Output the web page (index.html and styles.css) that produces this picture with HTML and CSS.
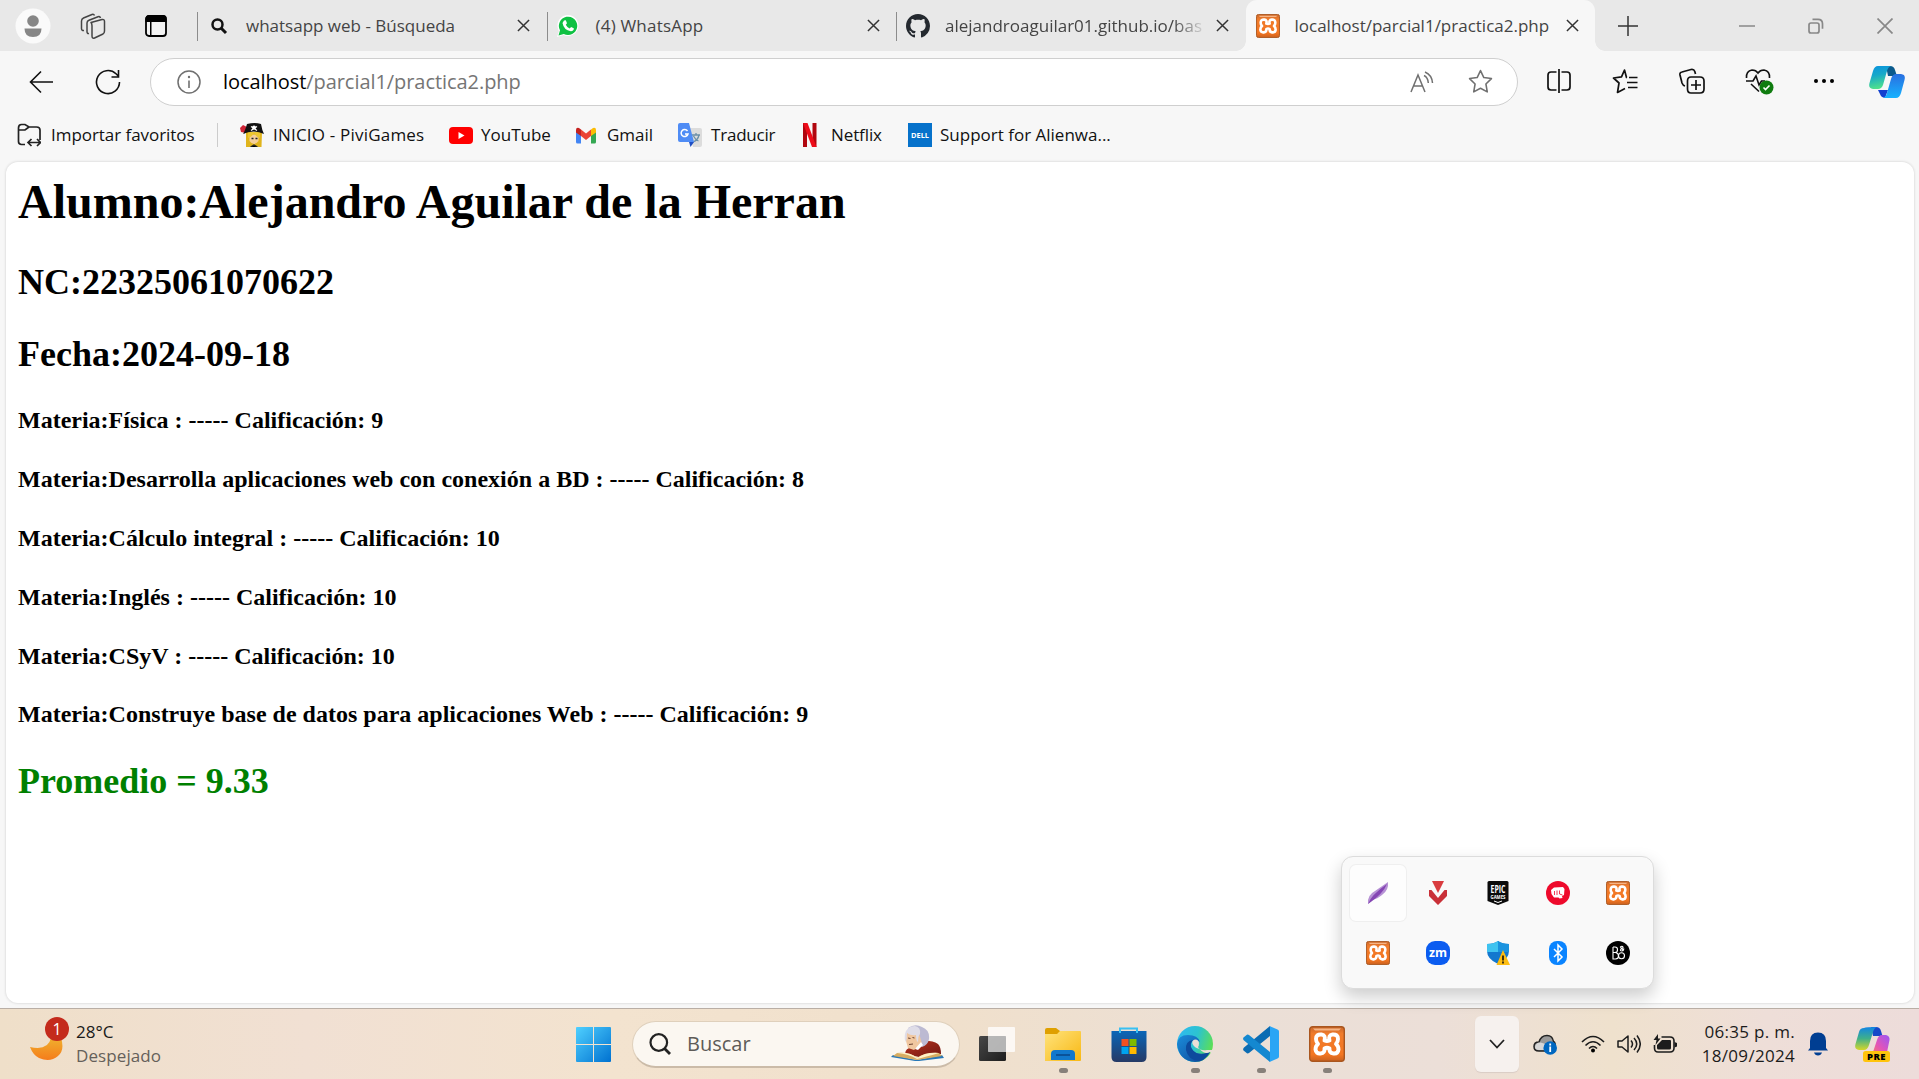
FILE: index.html
```html
<!DOCTYPE html>
<html lang="es">
<head>
<meta charset="utf-8">
<title>localhost/parcial1/practica2.php</title>
<link rel="stylesheet" href="styles.css">
</head>
<body>
<svg class="defs" aria-hidden="true">
  <defs>
    <linearGradient id="orange" x1="0" y1="0" x2="0" y2="1"><stop offset="0" stop-color="#c9662a"/><stop offset=".2" stop-color="#f07c2c"/><stop offset=".8" stop-color="#f47621"/><stop offset="1" stop-color="#c9601f"/></linearGradient>
    <linearGradient id="cpA" x1="0" y1="0" x2=".2" y2="1"><stop offset="0" stop-color="#0b93df"/><stop offset=".45" stop-color="#17a9c9"/><stop offset="1" stop-color="#4fe08c"/></linearGradient>
    <linearGradient id="cpB" x1="0" y1="0" x2="0" y2="1"><stop offset="0" stop-color="#2a6fe0"/><stop offset="1" stop-color="#16b2ff"/></linearGradient>
    <linearGradient id="preA" x1="0" y1="0" x2="0" y2="1"><stop offset="0" stop-color="#1285e4"/><stop offset=".5" stop-color="#3fb08a"/><stop offset="1" stop-color="#d5d629"/></linearGradient>
    <linearGradient id="preB" x1="1" y1="0" x2="0" y2="1"><stop offset="0" stop-color="#9a57f5"/><stop offset=".5" stop-color="#e254b8"/><stop offset="1" stop-color="#ff8a50"/></linearGradient>
    <linearGradient id="win" x1="0" y1="0" x2="1" y2="1"><stop offset="0" stop-color="#4fd0ff"/><stop offset="1" stop-color="#0071d0"/></linearGradient>
    <linearGradient id="moon" x1="0" y1="0" x2="0" y2="1"><stop offset="0" stop-color="#f0b02e"/><stop offset="1" stop-color="#f57c1b"/></linearGradient>
    <linearGradient id="folder" x1="0" y1="0" x2="1" y2="1"><stop offset="0" stop-color="#ffe37c"/><stop offset="1" stop-color="#f8b814"/></linearGradient>
    <linearGradient id="store" x1="0" y1="0" x2="0" y2="1"><stop offset="0" stop-color="#0a66b8"/><stop offset="1" stop-color="#263a66"/></linearGradient>
    <linearGradient id="edgeTop" x1="0" y1=".3" x2="1" y2=".6"><stop offset="0" stop-color="#2fbaf0"/><stop offset=".5" stop-color="#2cc3d0"/><stop offset="1" stop-color="#5fe04e"/></linearGradient>
    <linearGradient id="edgeLow" x1="0" y1="0" x2="1" y2="1"><stop offset="0" stop-color="#1b8ddb"/><stop offset="1" stop-color="#0d4596"/></linearGradient>
    <linearGradient id="dark" x1="0" y1="0" x2="1" y2="1"><stop offset="0" stop-color="#484848"/><stop offset="1" stop-color="#1d1d1d"/></linearGradient>
    <linearGradient id="robe" x1="0" y1="0" x2="1" y2="1"><stop offset="0" stop-color="#b8361f"/><stop offset="1" stop-color="#711510"/></linearGradient>
    <symbol id="x" viewBox="0 0 14 14"><path d="M1 1l12 12M13 1L1 13" fill="none" stroke="currentColor" stroke-width="1.6"/></symbol>
    <symbol id="xampp" viewBox="0 0 36 36">
      <rect x=".7" y=".7" width="34.6" height="34.6" rx="3" fill="url(#orange)" stroke="#a9561f" stroke-width="1.4"/>
      <path d="M4 2.500h28l-2 2H6z" fill="#fbc79c" opacity=".8"/>
      <path d="M15.500 14.500Q17 9 12.500 8.500Q7 8 7 13Q7 16 9 18Q6.500 20 6.500 23.500Q7 28 11.500 27.500Q16 27 15.500 22.500Q18 21 20.500 22.500Q20 27 24.500 27.500Q29 28 29.500 23.500Q29.500 20 27 18Q29 16 29 13Q29 8 23.500 8.500Q19 9 20.500 14.500Q18 15.500 15.500 14.500z" fill="none" stroke="#fff" stroke-width="3.900" stroke-linejoin="round"/>
    </symbol>
  </defs>
</svg>

<div class="screen">
  <header class="tabs">
    <div class="tab-tools">
      <svg class="avatar" viewBox="0 0 36 36"><circle cx="18" cy="18" r="17.500" fill="#fafafa"/><circle cx="18" cy="13" r="5.800" fill="#868686"/><path d="M9.500 20.500h17q0 8.500-8.500 8.500t-8.500-8.500z" fill="#868686"/></svg>
      <svg class="spaces" viewBox="0 0 26 26"><g fill="none" stroke="#444" stroke-width="1.500" stroke-linejoin="round"><path d="M11 9.500l11-3q2.500-.5 2.500 2v9.500q0 2-1.500 3l-8.500 4q-2.500.8-2.500-2V13q0-2.500-1-3.500z"/><path d="M9 20.500q-2 .5-2-2V10q0-2 2-2.800l9-3.500q2-.6 2.500 1.300M4 17.500q-2.500.3-2.500-2V8q0-2.200 2-3l8.500-3.500q1.800-.6 2.500 1"/></g></svg>
      <svg class="panel" viewBox="0 0 24 24"><rect x="2" y="2" width="20" height="20" rx="3" fill="#f3f3f3" stroke="#000" stroke-width="1.800"/><path d="M1.500 8V5q0-4 4-4h13q4 0 4 4v3zM6 8h1.500v14H6z"/></svg>
    </div>
    <div class="tab">
      <svg class="fav" viewBox="0 0 24 24"><circle cx="10.500" cy="10.500" r="5" fill="none" stroke="#111" stroke-width="2.500"/><path d="M14 14l5 5" stroke="#111" stroke-width="3"/></svg>
      <span class="tab-title">whatsapp web - Búsqueda</span>
      <svg class="tab-x"><use href="#x"/></svg>
    </div>
    <div class="tab">
      <svg class="fav" viewBox="0 0 24 24"><path d="M0 23l2-6A10.500 10.500 0 1 1 6.500 21z" fill="#fff"/><path d="M1.500 21.500l1.500-5.200A9.200 9.200 0 1 1 6.800 20z" fill="#0fc143"/><path d="M7 6.500l1.800-.2 1.200 3-1.200 1.400q1.200 2.500 3.800 3.700l1.500-1.500 2.700 1.400q.3 2.700-3 3-7-1-8.300-8.200z" fill="#fff"/></svg>
      <span class="tab-title wide">(4) WhatsApp</span>
      <svg class="tab-x"><use href="#x"/></svg>
    </div>
    <div class="tab">
      <svg class="fav" viewBox="0 0 16 16"><path fill="#24292f" d="M8 0C3.580 0 0 3.580 0 8c0 3.540 2.290 6.530 5.470 7.590.4.070.55-.17.55-.38 0-.19-.01-.82-.01-1.490-2.010.37-2.530-.49-2.690-.94-.09-.23-.48-.94-.82-1.130-.28-.15-.68-.52-.01-.53.63-.01 1.080.58 1.230.82.72 1.210 1.870.87 2.330.66.070-.52.280-.87.510-1.070-1.780-.2-3.640-.89-3.640-3.950 0-.87.310-1.590.82-2.150-.08-.2-.36-1.020.08-2.120 0 0 .67-.21 2.200.82.640-.18 1.320-.27 2-.27s1.360.09 2 .27c1.530-1.040 2.200-.82 2.200-.82.440 1.100.16 1.920.08 2.120.51.560.82 1.270.82 2.150 0 3.070-1.870 3.750-3.650 3.950.29.25.54.73.54 1.480 0 1.070-.01 1.930-.01 2.200 0 .21.15.46.55.38A8 8 0 0 0 16 8c0-4.420-3.580-8-8-8z"/></svg>
      <span class="tab-title fade">alejandroaguilar01.github.io/bas</span>
      <svg class="tab-x"><use href="#x"/></svg>
    </div>
    <div class="tab active">
      <svg class="fav"><use href="#xampp"/></svg>
      <span class="tab-title">localhost/parcial1/practica2.php</span>
      <svg class="tab-x"><use href="#x"/></svg>
    </div>
    <svg class="new-tab" viewBox="0 0 20 20"><path d="M10 0v20M0 10h20" stroke="#333" stroke-width="1.500"/></svg>
    <div class="window-buttons">
      <svg viewBox="0 0 16 16"><path d="M0 8h16" stroke="#888" stroke-width="1.500"/></svg>
      <svg viewBox="0 0 16 16"><g fill="none" stroke="#888" stroke-width="1.700"><rect x="1" y="5" width="10" height="10" rx="2"/><path d="M4.500 1.300H10q4.500 0 4.500 4.500v5"/></g></svg>
      <svg viewBox="0 0 16 16"><path d="M.5.500l15 15M15.500.500l-15 15" stroke="#888" stroke-width="1.700"/></svg>
    </div>
  </header>

  <div class="toolbar">
    <svg class="back" viewBox="0 0 24 24"><path d="M12 1.500L1.500 12 12 22.500M1.500 12H24" fill="none" stroke="#111" stroke-width="1.600"/></svg>
    <svg class="reload" viewBox="0 0 26 26"><path d="M24.500 13A11.500 11.500 0 1 1 21 4.800l2 2M23.500 1v7h-7" fill="none" stroke="#111" stroke-width="1.600"/></svg>
    <div class="address">
      <svg class="info" viewBox="0 0 24 24"><circle cx="12" cy="12" r="11" fill="none" stroke="#707070" stroke-width="1.500"/><path d="M12 10.500V18" stroke="#707070" stroke-width="1.600"/><circle cx="12" cy="7" r="1.200" fill="#707070"/></svg>
      <span class="url"><b>localhost</b>/parcial1/practica2.php</span>
      <svg class="read" viewBox="0 0 24 22"><path d="M1 21L8 4l7 17M3.500 15h9M14 4.500q4 2 4.300 7.500M15 1q7 3 7.500 11" fill="none" stroke="#707070" stroke-width="1.500"/></svg>
      <svg class="star" viewBox="0 0 24 24"><path d="M12 1.500l3.200 6.700 7.300 1-5.300 5.200 1.300 7.600-6.500-3.500L5.500 22l1.300-7.600L1.500 9.200l7.300-1z" fill="none" stroke="#707070" stroke-width="1.500" stroke-linejoin="round"/></svg>
    </div>
    <div class="actions">
      <svg viewBox="0 0 26 26"><path d="M10.500 4H5Q2 4 2 7v12q0 3 3 3h5.500M15.500 4H21q3 0 3 3v12q0 3-3 3h-5.500M13 1v24" fill="none" stroke="#111" stroke-width="1.700"/></svg>
      <svg viewBox="0 0 26 26"><path d="M15 9.500h-.500L12.500 2 9.500 8.800 1.500 10l5.500 5-1.500 9.500 7.500-4M17 9.500h8.500M15 14.500h10.500M16 19.500h9.500" fill="none" stroke="#111" stroke-width="1.700" stroke-linejoin="round"/></svg>
      <svg viewBox="0 0 26 26"><path d="M6 18Q4 17.500 3 15L1 7Q.5 4.500 3 4l9-2.500q3-.5 3.800 2L16.500 6M12 9h9q4 0 4 4v8q0 4-4 4h-9q-3.500 0-3.500-4v-8q0-4 3.500-4zM17 12v10M12 17h10" fill="none" stroke="#111" stroke-width="1.700"/></svg>
      <svg class="health" viewBox="0 0 30 28"><path d="M1.500 10Q1 3 7 2q4 0 6 3 2-3 6-3 6 1 5.500 8M1 13h7l3-5 3 9 2.500-4H20M6 16l8 7.500" fill="none" stroke="#111" stroke-width="1.600"/><circle cx="21.500" cy="19.500" r="7" fill="#107c10"/><path d="M18.500 19.500l2 2 4-4" fill="none" stroke="#fff" stroke-width="1.600"/></svg>
      <svg viewBox="0 0 26 26"><circle cx="5" cy="13" r="2"/><circle cx="13" cy="13" r="2"/><circle cx="21" cy="13" r="2"/></svg>
    </div>
    <svg class="copilot" viewBox="0 0 36 32"><path d="M17 0h4q4 0 5 4l2 6h-9z" fill="#0b5a8c"/><path d="M9 24h10l-3 8q-4-.5-5-4z" fill="#1240d0"/><path d="M9 0h13q-3 1-4 5l-4 14q-1.500 4-5 4H4q-5-.5-3.500-6L4 5q1.500-5 5-5z" fill="url(#cpA)"/><path d="M27 32H14q3-1 4-5l4-14q1.500-5 5-5h5q5 .5 3.500 6L32 27q-1.500 5-5 5z" fill="url(#cpB)"/></svg>
  </div>

  <nav class="favorites">
    <span class="bm import"><svg viewBox="0 0 24 24"><path d="M8 21.500H4.500q-3 0-3-3V5q0-3.500 3-3.500H8L12 4h7.500q3.500 0 3.500 3v10M1.500 7H8l4-3M12 19.500h11M14.500 16L11 19.500l3.500 3.500M20 16l3.500 3.500L20 23" fill="none" stroke="#222" stroke-width="1.700"/></svg><span>Importar favoritos</span></span>
    <span class="bm pivi"><svg viewBox="0 0 24 24"><path d="M6 9h16l-.5 15H18l-4-2-4 2H6z" fill="#e0b41c"/><path d="M9.500 13q4.500-3 9 0v5q-4.500 6-9 0z" fill="#f5cf9b"/><path d="M8 15q4-1 6-5 2 4 6 5V9H8z" fill="#edc732"/><path d="M0 5l3-3 4 2-1 6-5-1z" fill="#cf2436"/><path d="M3 11Q5 8 7 1q8-2 14 0 1 6 3 10-5-2.500-10.500-2.500T3 11z" fill="#111"/><path d="M11 3.500l6 4M17 3.500l-6 4" stroke="#fff" stroke-width="1.300"/><circle cx="14" cy="4.500" r="2" fill="#fff"/><path d="M11.500 15.500h2M15.500 15.500h2M10.500 24l3.500-2 3.500 2" stroke="#222" stroke-width="1.300"/></svg><span>INICIO - PiviGames</span></span>
    <span class="bm yt"><svg viewBox="0 0 24 24"><rect y="4" width="24" height="17" rx="4" fill="#f00"/><path d="M9.500 9l6 3.500-6 3.500z" fill="#fff"/></svg><span>YouTube</span></span>
    <span class="bm gm"><svg viewBox="0 0 24 24"><path d="M2 7v12q0 1.500 1.500 1.500H7V11z" fill="#4285f4"/><path d="M22 7v12q0 1.500-1.500 1.500H17V11z" fill="#34a853"/><path d="M17 6.500l2-1.500q3-1 3 2v2.500L17 13z" fill="#fbbc04"/><path d="M7 6.500L5 5Q2 4 2 7v2.500L7 13z" fill="#c5221f"/><path d="M7 6.500l5 4 5-4V13l-5 4-5-4z" fill="#ea4335"/></svg><span>Gmail</span></span>
    <span class="bm tr"><svg viewBox="0 0 24 24"><path d="M10 5h12q2 0 2 2v15q0 2-2 2h-7z" fill="#dcdcdc"/><path d="M14 12h8M18 10v2M21 12q-1 5-6 7M15.500 13q2 4 5 5" fill="none" stroke="#6b8fa8" stroke-width="1.300"/><path d="M2 0h9l5 19H2q-2 0-2-2V2q0-2 2-2z" fill="#4f8cf5"/><path d="M11 19h5l-3.500 5z" fill="#1f4fc4"/><path d="M9.500 8A3.500 3.500 0 1 0 10 11H7" fill="none" stroke="#fff" stroke-width="1.500"/></svg><span>Traducir</span></span>
    <span class="bm nf"><svg viewBox="0 0 24 24"><path d="M5 0h4v24H5zM14.500 0h4v24h-4z" fill="#b1060f"/><path d="M5 0h4.500l9 24H14z" fill="#ed0c19"/></svg><span>Netflix</span></span>
    <span class="bm dell"><svg viewBox="0 0 24 24"><path d="M0 0h24v24H0z" fill="#0672cb"/><text x="12" y="14.800" text-anchor="middle" textLength="18" lengthAdjust="spacingAndGlyphs" class="dell-text">DELL</text></svg><span>Support for Alienwa...</span></span>
  </nav>

  <main class="page">
    <h1>Alumno:Alejandro Aguilar de la Herran</h1>
    <h2>NC:22325061070622</h2>
    <h2>Fecha:2024-09-18</h2>
    <h4>Materia:Física : ----- Calificación: 9</h4>
    <h4>Materia:Desarrolla aplicaciones web con conexión a BD : ----- Calificación: 8</h4>
    <h4>Materia:Cálculo integral : ----- Calificación: 10</h4>
    <h4>Materia:Inglés : ----- Calificación: 10</h4>
    <h4>Materia:CSyV : ----- Calificación: 10</h4>
    <h4>Materia:Construye base de datos para aplicaciones Web : ----- Calificación: 9</h4>
    <h2 class="average">Promedio = 9.33</h2>
  </main>

  <footer class="taskbar">
    <div class="weather">
      <div class="moon"><svg viewBox="0 0 33 30"><path d="M31 4Q35 16 28 22 20 29 9 24 3 21 0 13q18 4 21-9z" fill="url(#moon)"/></svg><span class="badge">1</span></div>
      <div class="weather-text"><span class="temp">28°C</span><span class="sky">Despejado</span></div>
    </div>
    <svg class="start" viewBox="0 0 35 35"><path d="M1 0h16v17H0V1q0-1 1-1zM18 0h16q1 0 1 1v16H18zM0 18h17v17H1q-1 0-1-1zM18 18h17v16q0 1-1 1H18z" fill="url(#win)"/></svg>
    <div class="search">
      <svg class="lens" viewBox="0 0 22 22"><circle cx="9.800" cy="9.500" r="8.300" fill="none" stroke="#222" stroke-width="2.200"/><path d="M15.500 15.500l5.500 5.500" stroke="#222" stroke-width="2.800"/></svg>
      <span class="search-text">Buscar</span>
      <svg class="writer" viewBox="0 0 53 37"><path d="M14 29q0-6 8-7l8-6q11-1 17 3 3 3 3 10l-22 3z" fill="url(#robe)"/><path d="M17 3q7-5 14-1 8 3 7 12-1 6-7 8l-6-4z" fill="#bcbad2"/><path d="M17 6q-4 3-2 10l2 7 6 2 8-6-3-11z" fill="#f0c7a0"/><path d="M14 9q2-8 10-8 6 1 5 8-2 2-2 8-2-1-2-7-5 1-9-2 0 5-1 9-2-3-1-8z" fill="#dfdde8"/><path d="M17 13l2.500.500M21.500 12.500l2 .500M18 19.500l4-.500" stroke="#6d4433" stroke-width="1"/><path d="M24 24l6-7 2 3-5 5z" fill="#fff"/><path d="M0 32l2-2 24 5 25-5 2 3-25 3h-4z" fill="#2878b8"/><path d="M2 31l4-3q14-1 20 5 8-6 22-5l3 3-25 4z" fill="#d7ad62"/><path d="M6 28q14-1 20 5 8-6 22-5-14 4-22 6Q18 29 6 28z" fill="#fff1c7"/></svg>
    </div>
    <div class="apps">
      <div class="app"><svg viewBox="0 0 36 36"><rect y="10" width="27" height="25" rx="1.500" fill="url(#dark)"/><rect x="9" y="1" width="27" height="25" rx="1" fill="#fff" opacity=".78"/><path d="M9 10h18v16H9z" fill="#999" opacity=".5"/></svg></div>
      <div class="app open"><svg viewBox="0 0 36 36"><path d="M0 4q0-2 2-2h9l4 3v4H0z" fill="#dfa000"/><path d="M0 8h12l3-3h20q1 0 1 1v28q0 1-1 1H0z" fill="url(#folder)"/><path d="M6 34v-6q0-4 4-4h16q4 0 4 4v6z" fill="#1178cc"/><path d="M11 29h14" stroke="#0a4a8c" stroke-width="1.600"/></svg></div>
      <div class="app"><svg viewBox="0 0 36 36"><path d="M9 8V2.500h17V8" fill="none" stroke="#38c0f2" stroke-width="2"/><path d="M.5 5h35v26q0 5-5 5h-25q-5 0-5-5z" fill="url(#store)"/><path d="M9 7V5M26 7V5" stroke="#38c0f2" stroke-width="2"/><path d="M10.500 13H17.500v7H10.500z" fill="#f25022"/><path d="M18.500 13h7v7h-7z" fill="#7fba00"/><path d="M10.500 21h7v7h-7z" fill="#00a4ef"/><path d="M18.500 21h7v7h-7z" fill="#ffb900"/></svg></div>
      <div class="app open"><svg viewBox="0 0 36 36"><circle cx="18" cy="18" r="18" fill="url(#edgeTop)"/><path d="M0 18Q1 9 11 9q10 0 12 7-4-3-8-.500-3 4 1 9.500 6 5 17 1-5 10-15 10Q2 35 0 18z" fill="url(#edgeLow)"/><path d="M9 24q-1-9 7-10-4 4-1 9 6 9 18 3-4 7-11 9Q11 34 9 24z" fill="#0d4a9d"/><path d="M22.500 23q-5-1-7-5-1-4 3-4.500 3 0 3.500 3.500 0 3-1 4 2 4 9 3h7v6l-4-4q-5 3-10.500-3z" fill="#ebdfd7"/></svg></div>
      <div class="app open"><svg viewBox="0 0 36 36"><path d="M27 0v10L6 27q-1.500 1-3-.500L.5 24.500q-1-1.500.5-3z" fill="#0b6cb3"/><path d="M27 36V26L6 9q-1.500-1-3 .500L.5 11.500q-1 1.500.5 3z" fill="#1488d0"/><path d="M26.500 0l8 3.500q1.500.5 1.500 2v25q0 1.500-1.500 2l-8 3.500q.5-1 .5-2V2q0-1-.5-2z" fill="#2aa5f5"/></svg></div>
      <div class="app open"><svg><use href="#xampp"/></svg></div>
    </div>
    <div class="chevron"><svg viewBox="0 0 16 10"><path d="M1 1l7 7.500L15 1" fill="none" stroke="#222" stroke-width="1.800"/></svg></div>
    <svg class="cloud" viewBox="0 0 24 21"><path d="M6 17q-5 0-5-4.500T6 8q2-6.500 8-6.500 5.500 0 6.500 6Q23 9 22 14L14 17z" fill="#999" stroke="#222" stroke-width="1.500"/><path d="M2 13q1-5 5.500-4.500Q12 9 16 12l-3 4H6q-4 0-4-3z" fill="#d7d7d7"/><circle cx="17.200" cy="14" r="6.800" fill="#0067c0"/><path d="M17.200 12.500v5.500M17.200 9.500v2" stroke="#fff" stroke-width="1.800"/></svg>
    <svg class="wifi" viewBox="0 0 24 18"><path d="M1 7Q12-4 23 7M4.500 10.500q7.500-7.500 15 0M8 13.500q4-4 8 0" fill="none" stroke="#1c1c1c" stroke-width="1.600"/><circle cx="12" cy="15.500" r="2"/></svg>
    <svg class="sound" viewBox="0 0 24 20"><path d="M1 7h4l6-5v16l-6-5H1zM14 6.500q3 3.500 0 7M17 4q5.500 6 0 12M20 1.500q6.500 8.500 0 17" fill="none" stroke="#1c1c1c" stroke-width="1.500" stroke-linejoin="round"/></svg>
    <svg class="battery" viewBox="0 0 24 20"><path d="M8.500 3H17q4 0 4 4v7q0 4-4 4H5q-3.500 0-3.500-4v-3" fill="none" stroke="#1c1c1c" stroke-width="1.600"/><path d="M9 6h8q1 0 1 1v7q0 1.500-1.500 1.500h-11Q4 15.500 4 14v-3zM21.500 8l2.500 1v3.500l-2.500 1zM5 0L.5 6h3l-1 5 5-6.500H5z" fill="#1c1c1c"/></svg>
    <div class="clock"><span class="time">06:35 p. m.</span><span class="date">18/09/2024</span></div>
    <svg class="bell" viewBox="0 0 20 24"><path d="M2 16V9q0-8.500 8-8.500T18 9v7l2 2.500H0zM6 20.500h8q-1 3-4 3t-4-3z" fill="#003e92"/></svg>
    <svg class="pre" viewBox="0 0 35 35"><path d="M16 0h5q4 0 5 4l1.500 5H18z" fill="#1648c8"/><path d="M9 1Q11 0 22 0q-3 1-4 5l-4 13q-1.500 5-5 5H4q-5-.5-3.500-6L4 5q1-4 5-4z" fill="url(#preA)"/><path d="M14 30q3-2 4-5l4-12q1.500-5 5-5h4q4 1 3.500 5L31 30z" fill="url(#preB)"/><rect x="8" y="24" width="27" height="11" rx="2.500" fill="#ffc40c"/><text x="21.500" y="32.500" text-anchor="middle" class="pre-text">PRE</text></svg>
  </footer>

  <div class="flyout">
    <div class="tray selected"><svg viewBox="0 0 24 24"><path d="M2 23Q1 14 9 10L22 1q1 8-6 13-5 4-9 4.500z" fill="#b792d5"/><path d="M2 23Q5 14 21 3 17 13 2 23z" fill="#8546b4"/></svg></div>
    <div class="tray"><svg viewBox="0 0 24 24"><path d="M6 0h12l-6 12z" fill="#d93c3f"/><path d="M3 9l2.500 0L12 17l6.500-8H21v6l-9 9-9-9z" fill="#c93038"/></svg></div>
    <div class="tray"><svg viewBox="0 0 24 24"><path d="M1.500 1.500Q1.500 0 3 0h18q1.500 0 1.500 1.500V20L12 24 1.500 20z" fill="#0b0b0b"/><text x="12" y="12" text-anchor="middle" textLength="15" lengthAdjust="spacingAndGlyphs" class="epic">EPIC</text><text x="12" y="17.500" text-anchor="middle" textLength="15" lengthAdjust="spacingAndGlyphs" class="games">GAMES</text><path d="M8 20l4 1.500 4-1.500" stroke="#fff" fill="none"/></svg></div>
    <div class="tray"><svg viewBox="0 0 24 24"><circle cx="12" cy="12" r="12" fill="#ee0a2c"/><path d="M5 9l3-2.500 9-.5 1.500 2-.5 6-2 1 .5 2-3 .5-1-1H8L5.500 13z" fill="#fff"/><path d="M8.500 10v4M11 9.500v4.500M13.500 9.500V13l3 1" stroke="#ee0a2c" stroke-width=".8" fill="none"/></svg></div>
    <div class="tray"><svg><use href="#xampp"/></svg></div>
    <div class="tray"><svg><use href="#xampp"/></svg></div>
    <div class="tray"><svg viewBox="0 0 24 24"><rect width="24" height="24" rx="9" fill="#0b5cf0"/><text x="12" y="16" text-anchor="middle" textLength="18" lengthAdjust="spacingAndGlyphs" class="zm">zm</text></svg></div>
    <div class="tray"><svg viewBox="0 0 24 24"><path d="M1 3q7 0 11-3 4 3 11 3v7q0 8-11 13Q1 18 1 10z" fill="#1378cf"/><path d="M1 3q7 0 11-3v11H1z" fill="#3fc3f0"/><path d="M12 0q4 3 11 3v8H12z" fill="#1b93df"/><path d="M17 9l7 15H10.500z" fill="#fdbd11"/><path d="M17 14.500v5M17 20.500v2" stroke="#111" stroke-width="1.600"/></svg></div>
    <div class="tray"><svg viewBox="0 0 24 24"><rect x="3" width="18" height="24" rx="8" fill="#0a84ff"/><path d="M8 8l8 8-4 4V4l4 4-8 8" fill="none" stroke="#fff" stroke-width="1.500"/></svg></div>
    <div class="tray"><svg viewBox="0 0 24 24"><circle cx="12" cy="12" r="12"/><g fill="none" stroke="#fff" stroke-width="1.100"><path d="M7 6v12h2.500q3 0 3-3t-3-3.500H7M7 6h2q2.500 0 2.500 2.700T9 11.500"/><circle cx="15.500" cy="14.800" r="3"/><path d="M17.500 10l-3-4q1.500-1.500 2.500 0 .5 1-2 2-1.500 2 1 2 1.500-.5 2-2.500"/></g></svg></div>
  </div>
</div>
</body>
</html>
```
FILE: styles.css
```css
* { box-sizing: border-box; }
body { margin: 0; font-family: "Open Sans", "Noto Sans", sans-serif; overflow: hidden; }
svg { display: block; flex: none; }
.defs { position: absolute; width: 0; height: 0; }
.screen { position: relative; width: 1919px; height: 1079px; display: flex; flex-direction: column; background: #f7f7f7; }

/* tab strip */
.tabs { display: flex; height: 51px; background: #e8e8e8; align-items: center; }
.tab-tools { display: flex; align-items: center; width: 197px; padding-left: 15px; }
.avatar { width: 36px; height: 36px; }
.spaces { width: 26px; height: 26px; margin-left: 29px; }
.panel { width: 24px; height: 24px; margin-left: 38px; }
.tab { position: relative; display: flex; align-items: center; width: 349.500px; height: 51px; padding-left: 10px; }
.tab:not(.active)::before { content: ""; position: absolute; left: 0; top: 12px; width: 1px; height: 29px; background: #8c8c8c; }
.tab.active { background: #f7f7f7; border-radius: 11px 11px 0 0; }
.tab.active::before, .tab.active::after { content: ""; position: absolute; bottom: 0; width: 10px; height: 10px; }
.tab.active::before { left: -10px; background: radial-gradient(circle at 0 0, #e8e8e8 9.500px, #f7f7f7 10px); }
.tab.active::after { right: -10px; background: radial-gradient(circle at 100% 0, #e8e8e8 9.500px, #f7f7f7 10px); }
.fav { width: 24px; height: 24px; }
.tab-title { width: 260px; margin-left: 15px; font-size: 17px; line-height: 24px; color: #444; white-space: nowrap; }
.wide { letter-spacing: .2px; }
.tab-x { width: 13px; height: 13px; margin-left: 11px; color: #333; }
.fade { mask-image: linear-gradient(90deg, #000 228px, transparent 262px); }
.new-tab { width: 20px; height: 20px; margin-left: 23px; }
.window-buttons { display: flex; gap: 53px; margin-left: auto; margin-right: 26px; }
.window-buttons svg { width: 16px; height: 16px; }

/* address row */
.toolbar { display: flex; align-items: center; height: 61px; }
.back { width: 24px; height: 24px; margin-left: 29px; }
.reload { width: 26px; height: 26px; margin-left: 42px; }
.address { display: flex; align-items: center; width: 1368px; height: 48px; margin-left: 29px; padding: 0 24px 0 26px; background: #fff; border: 1px solid #cfcfcf; border-radius: 24px; }
.info { width: 24px; height: 24px; }
.url { flex: 1; margin-left: 22px; font-size: 20px; letter-spacing: -.06px; line-height: 28px; color: #757575; white-space: nowrap; }
.url b { font-weight: 400; color: #000; }
.read { width: 24px; height: 22px; margin-right: 34px; }
.star { width: 25px; height: 25px; }
.actions { display: flex; gap: 40.300px; margin-left: 28px; }
.actions svg { width: 26px; height: 26px; }
.actions .health { width: 30px; height: 28px; margin-right: -4px; }
.copilot { width: 36px; height: 32px; margin-left: 32px; }

/* favorites row */
.favorites { display: flex; align-items: center; height: 50px; padding: 0 0 4px 17px; }
.bm { display: flex; align-items: center; gap: 9px; font-size: 17px; line-height: 24px; color: #111; white-space: nowrap; }
.bm svg { width: 24px; height: 24px; }
.import { width: 201px; height: 24px; border-right: 1px solid #ccc; letter-spacing: -.05px; }
.import svg { margin-right: 1px; }
.pivi { width: 209px; margin-left: 22px; letter-spacing: .2px; }
.yt { width: 125px; gap: 8px; }
.gm { width: 104px; }
.tr { width: 120px; letter-spacing: -.2px; }
.nf { width: 110px; letter-spacing: -.1px; }
.dell { gap: 8px; }
.dell-text { font: 700 7px "Open Sans", sans-serif; fill: #fff; }

/* document */
.page { width: 1908px; height: 841px; margin-left: 6px; padding: 12px; background: #fff; border-radius: 12px; box-shadow: 0 0 2px 1px #e2e2e2; font-family: "Liberation Serif", "Times New Roman", serif; color: #000; }
.page h1 { margin: 0 0 32.160px; font-size: 48px; line-height: 55px; }
.page h2 { margin: 29.880px 0; font-size: 36px; line-height: 42px; }
.page h4 { margin: 31.920px 0; font-size: 24px; line-height: 27px; }
.page .average { color: #008000; }

/* taskbar */
.taskbar { display: flex; align-items: center; height: 71px; margin-top: auto; border-top: 1px solid #b9aea5; background: linear-gradient(90deg, #efdfc9 0, #f1e0d3 16%, #f3e3cf 32%, #f0e0cc 50%, #ebdfd6 65%, #ecdfd8 75%, #efe1cd 84%, #eeded8 92%, #eddcda 100%); }
.weather { display: flex; width: 576px; padding-left: 30px; }
.moon { position: relative; width: 34px; padding-top: 14px; }
.moon svg { width: 33px; height: 30px; }
.badge { position: absolute; left: 15px; top: -3px; width: 24px; height: 24px; border-radius: 50%; background: #c42b1c; color: #fff; font-size: 16px; line-height: 24px; text-align: center; }
.weather-text { display: flex; flex-direction: column; margin-left: 12px; font-size: 17px; line-height: 24px; color: #1b1b1b; }
.sky { color: #65605a; letter-spacing: .1px; }
.start { width: 35px; height: 35px; }
.search { display: flex; align-items: center; width: 328px; height: 47px; margin-left: 21px; padding: 0 15px 0 16px; background: #fbf7f1; border: 1px solid #dfd0bc; border-bottom: 2px solid #cbbba8; border-radius: 24px; }
.lens { width: 22px; height: 22px; }
.search-text { flex: 1; margin-left: 16px; font-size: 20px; line-height: 28px; color: #5e5b57; }
.writer { width: 53px; height: 37px; }
.apps { display: flex; gap: 30px; margin-left: 19px; }
.app { position: relative; width: 36px; height: 36px; }
.app svg { width: 36px; height: 36px; }
.open::after { content: ""; position: absolute; left: 14px; top: 42px; width: 9px; height: 5px; border-radius: 3px; background: #87807a; }
.chevron { display: flex; align-items: center; justify-content: center; width: 44px; height: 56px; margin-left: 130px; background: #f6f1ee; border-radius: 6px; box-shadow: 0 1px 1px #d9ccc5; }
.chevron svg { width: 16px; height: 10px; }
.cloud { width: 24px; height: 21px; margin-left: 14px; }
.wifi { width: 24px; height: 18px; margin-left: 24px; }
.sound { width: 24px; height: 20px; margin-left: 12px; }
.battery { width: 24px; height: 20px; margin-left: 12px; }
.clock { display: flex; flex-direction: column; align-items: flex-end; width: 118px; font-size: 17px; letter-spacing: .3px; line-height: 24px; color: #1b1b1b; white-space: nowrap; }
.bell { width: 20px; height: 24px; margin-left: 13px; }
.pre { width: 35px; height: 35px; margin-left: 27px; }
.pre-text { font: 800 9.500px "Open Sans", sans-serif; letter-spacing: .5px; }

/* hidden tray icons */
.flyout { position: absolute; left: 1341px; top: 856px; display: grid; grid-template-columns: repeat(5, 60px); grid-auto-rows: 60px; width: 313px; height: 133px; padding: 6px; background: #f9f9f9; border: 1px solid #dcdcdc; border-radius: 12px; box-shadow: 0 8px 18px rgba(0, 0, 0, .2); }
.tray { display: flex; align-items: center; justify-content: center; }
.tray svg { width: 24px; height: 24px; }
.selected { margin: 2px; background: #fdfdfd; border-radius: 6px; box-shadow: 0 0 0 1px #efefef; }
.epic { font: 700 11px "Open Sans", sans-serif; fill: #fff; }
.games { font: 700 5px "Open Sans", sans-serif; fill: #fff; }
.zm { font: 700 13px "Open Sans", sans-serif; fill: #fff; }
```
